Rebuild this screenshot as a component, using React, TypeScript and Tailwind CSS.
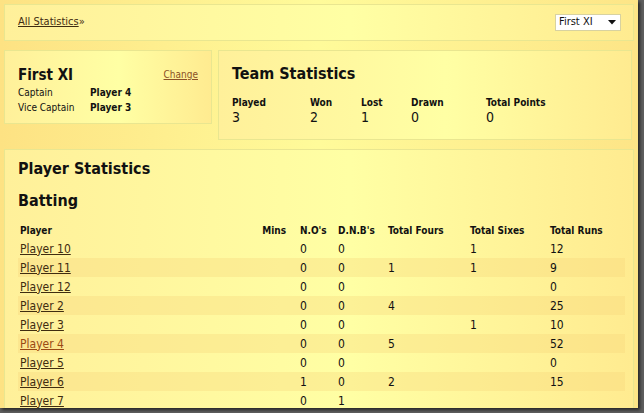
import React from "react";

const rows = [
  { name: "Player 10", mins: "", no: "0", dnb: "0", fours: "", sixes: "1", runs: "12" },
  { name: "Player 11", mins: "", no: "0", dnb: "0", fours: "1", sixes: "1", runs: "9" },
  { name: "Player 12", mins: "", no: "0", dnb: "0", fours: "", sixes: "", runs: "0" },
  { name: "Player 2", mins: "", no: "0", dnb: "0", fours: "4", sixes: "", runs: "25" },
  { name: "Player 3", mins: "", no: "0", dnb: "0", fours: "", sixes: "1", runs: "10" },
  { name: "Player 4", mins: "", no: "0", dnb: "0", fours: "5", sixes: "", runs: "52", visited: true },
  { name: "Player 5", mins: "", no: "0", dnb: "0", fours: "", sixes: "", runs: "0" },
  { name: "Player 6", mins: "", no: "1", dnb: "0", fours: "2", sixes: "", runs: "15" },
  { name: "Player 7", mins: "", no: "0", dnb: "1", fours: "", sixes: "", runs: "" },
];

const teamStats = [
  { label: "Played", value: "3", w: "w-[78px]" },
  { label: "Won", value: "2", w: "w-[51px]" },
  { label: "Lost", value: "1", w: "w-[50px]" },
  { label: "Drawn", value: "0", w: "w-[75px]" },
  { label: "Total Points", value: "0", w: "w-[90px]" },
];

const cols = "grid grid-cols-[242px_38px_38px_50px_82px_80px_1fr]";
const panel =
  "border border-[#e9e690] bg-[linear-gradient(to_right,#fff09a,#ffffa4_55%,#ffeb90)]";

export default function App() {
  return (
    <div
      className="w-[644px] h-[413px] overflow-hidden bg-[#5e5e5e] text-[#111]"
      style={{ fontFamily: '"DejaVu Sans Condensed", Tahoma, "Liberation Sans", sans-serif' }}
    >
      <div className="w-[638px] h-[408px] overflow-hidden bg-[linear-gradient(to_right,#fde283,#fffb9a_50%,#fde587)] shadow-[2px_2px_3px_rgba(0,0,0,0.6)] pt-[4px] px-[4px]">
        {/* top bar */}
        <div className={`${panel} h-[37px] flex items-center justify-between pl-[13px] pr-[12px]`}>
          <div className="text-[11px]">
            <a href="#" className="underline text-[#3f2c10]">All Statistics</a>
            <span className="text-[#3f2c10]">»</span>
          </div>
          <div className="w-[66px] h-[17px] bg-white border border-[#d8d2a0] flex items-center justify-between pl-[3px] pr-[4px] text-[11px]">
            <span>First XI</span>
            <svg width="8" height="5" viewBox="0 0 8 5">
              <path d="M0 0h8L4 4.5z" fill="#111" />
            </svg>
          </div>
        </div>

        {/* second row */}
        <div className="flex items-start gap-[6px] mt-[9px]">
          <div className={`${panel} w-[208px] h-[74px] pl-[13px] pr-[13px] pt-[15px]`}>
            <div className="flex items-end justify-between">
              <div className="text-[15px] font-bold leading-[18px]">First XI</div>
              <a href="#" className="text-[10px] underline text-[#8a5226] mb-[2px]">Change</a>
            </div>
            <div className="flex text-[10px] leading-[15px] mt-[1px]">
              <div className="w-[72px]">Captain</div>
              <div className="font-bold">Player 4</div>
            </div>
            <div className="flex text-[10px] leading-[15px]">
              <div className="w-[72px]">Vice Captain</div>
              <div className="font-bold">Player 3</div>
            </div>
          </div>
          <div className={`${panel} w-[414px] h-[90px] pl-[13px] pt-[13px]`}>
            <div className="text-[16px] font-bold leading-[20px]">Team Statistics</div>
            <div className="flex mt-[12px]">
              {teamStats.map((s) => (
                <div key={s.label} className={s.w}>
                  <div className="text-[10px] font-bold leading-[13px]">{s.label}</div>
                  <div className="text-[14px] leading-[17px]">{s.value}</div>
                </div>
              ))}
            </div>
          </div>
        </div>

        {/* player statistics */}
        <div className={`${panel} mt-[9px] h-[300px] pl-[13px] pr-[8px] pt-[9px]`}>
          <div className="text-[16px] font-bold leading-[20px]">Player Statistics</div>
          <div className="text-[16px] font-bold leading-[20px] mt-[12px]">Batting</div>
          <div className={`${cols} text-[10px] font-bold h-[17px] items-center mt-[11px]`}>
            <div className="pl-[2px]">Player</div>
            <div className="text-right pr-[12px]">Mins</div>
            <div className="pl-[2px]">N.O's</div>
            <div className="pl-[2px]">D.N.B's</div>
            <div className="pl-[2px]">Total Fours</div>
            <div className="pl-[2px]">Total Sixes</div>
            <div className="pl-[2px]">Total Runs</div>
          </div>
          {rows.map((r, i) => (
            <div
              key={r.name}
              className={`${cols} h-[19px] items-center text-[12px] ${i % 2 === 1 ? "bg-[rgba(246,210,120,0.3)]" : ""}`}
            >
              <div className="pl-[2px]">
                <a href="#" className={`underline ${r.visited ? "text-[#9a4a14]" : "text-[#3f2c10]"}`}>
                  {r.name}
                </a>
              </div>
              <div className="text-right pr-[12px]">{r.mins}</div>
              <div className="pl-[2px]">{r.no}</div>
              <div className="pl-[2px]">{r.dnb}</div>
              <div className="pl-[2px]">{r.fours}</div>
              <div className="pl-[2px]">{r.sixes}</div>
              <div className="pl-[2px]">{r.runs}</div>
            </div>
          ))}
        </div>
      </div>
    </div>
  );
}
